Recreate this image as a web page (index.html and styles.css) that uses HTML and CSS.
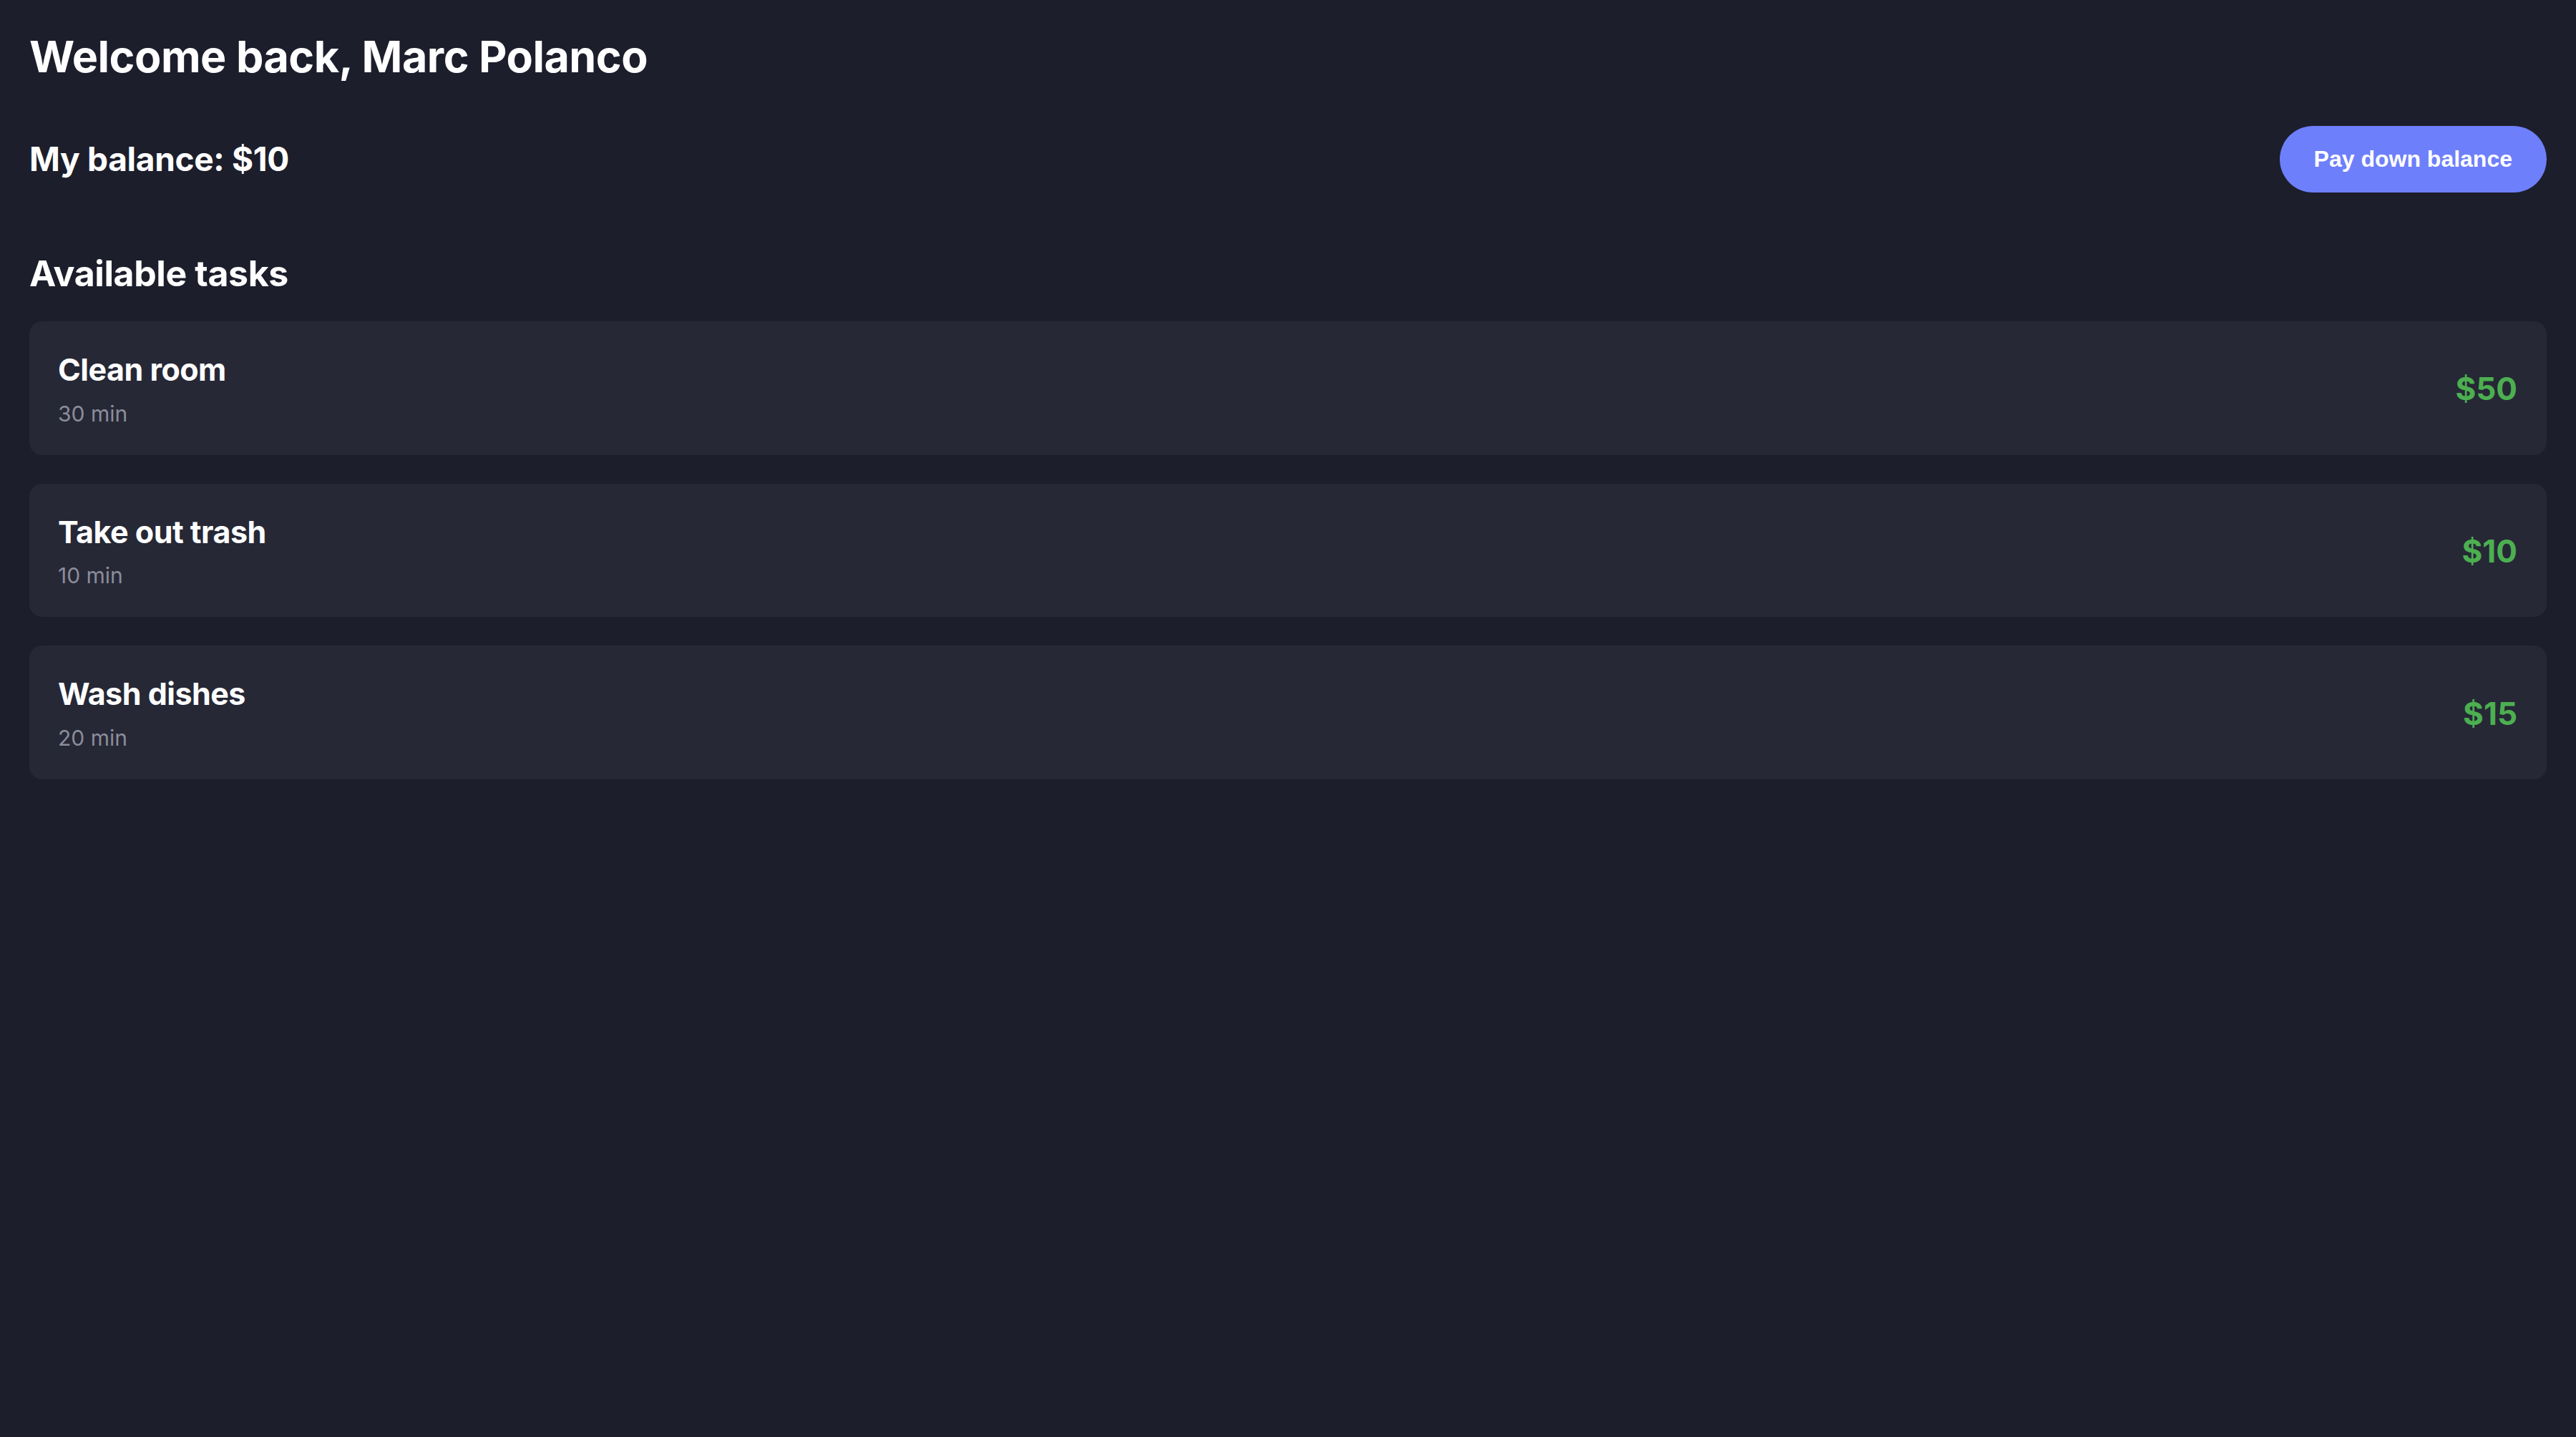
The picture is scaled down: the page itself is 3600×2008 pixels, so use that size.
FILE: index.html
```html
<!DOCTYPE html>
<html lang="en">
<head>
    <meta charset="UTF-8">
    <meta name="viewport" content="width=device-width, initial-scale=1.0">
    <title>Dashboard</title>
    <link rel="stylesheet" href="styles.css">
</head>
<body>

<div class="dashboard">
    <h1>Welcome back, Marc Polanco</h1>

    <div class="balance-row">
        <h3>My balance: $10</h3>
        <button class="pay-btn">Pay down balance</button>
    </div>

    <h2>Available tasks</h2>

    <div class="tasks">
        <div class="task">
            <div class="task-info">
                <h4>Clean room</h4>
                <p>30 min</p>
            </div>
            <div class="task-price">$50</div>
        </div>

        <div class="task">
            <div class="task-info">
                <h4>Take out trash</h4>
                <p>10 min</p>
            </div>
            <div class="task-price">$10</div>
        </div>

        <div class="task">
            <div class="task-info">
                <h4>Wash dishes</h4>
                <p>20 min</p>
            </div>
            <div class="task-price">$15</div>
        </div>
    </div>
</div>

</body>
</html>
```

FILE: styles.css
```css
body {
    font-family: Inter, "Noto Sans", sans-serif;
    margin: 0;
    padding: 0;
    background-color: #1c1e2b;
    color: #fff;
}
.dashboard {
    padding: 43px 41px;
}
.dashboard h1 {
    font-size: 61px;
    line-height: 1.2;
    font-weight: 700;
    letter-spacing: -0.5px;
    margin: 0;
}
.balance-row {
    display: flex;
    align-items: center;
    justify-content: space-between;
    margin-top: 60px;
}
.balance-row h3 {
    font-size: 46px;
    line-height: 1.2;
    font-weight: 700;
    letter-spacing: -0.3px;
    margin: 0;
}
.pay-btn {
    font-family: "Liberation Sans", Arial, sans-serif;
    font-size: 32px;
    font-weight: 700;
    color: #fff;
    background-color: #6e7ffb;
    border: none;
    border-radius: 999px;
    padding: 28px 48px;
    cursor: pointer;
}
.dashboard h2 {
    font-size: 50px;
    line-height: 1.2;
    font-weight: 700;
    letter-spacing: -0.4px;
    margin: 83px 0 37px;
}
.tasks {
    display: flex;
    flex-direction: column;
    gap: 40px;
}
.task {
    display: flex;
    align-items: center;
    justify-content: space-between;
    padding: 42px 41px 40px 40px;
    background-color: #262836;
    border-radius: 18px;
}
.task-info h4 {
    font-size: 43px;
    line-height: 1.2;
    font-weight: 700;
    letter-spacing: -0.5px;
    margin: 0 0 17px;
}
.task-info p {
    font-size: 30px;
    line-height: 1.2;
    color: #8b8d9a;
    margin: 0;
}
.task-price {
    font-size: 44px;
    font-weight: 700;
    color: #4caf50;
}
```
